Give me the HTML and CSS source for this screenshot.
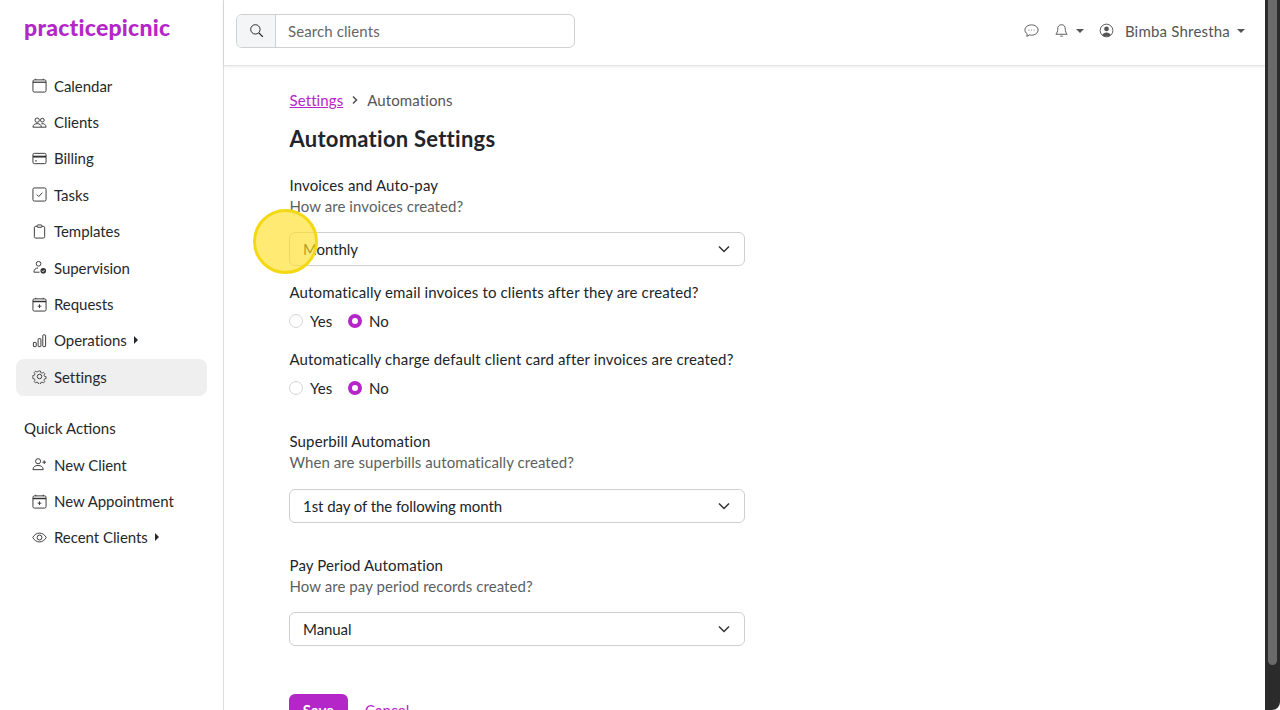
FILE: index.html
```html
<!DOCTYPE html>
<html lang="en">
<head>
<meta charset="utf-8">
<title>Automation Settings</title>
<link rel="stylesheet" href="styles.css">
</head>
<body>
<div class="app">
  <aside class="sidebar">
    <div class="logo">practicepicnic</div>
    <nav class="nav">
      <a class="item"><svg class="ico" viewBox="0 0 16 16"><rect x="1" y="2" width="14" height="13" rx="1.5"/><path d="M1 4.500h14" stroke-width="1.300"/><path d="M4 .8v1.200M12 .8v1.200"/></svg>Calendar</a>
      <a class="item"><svg class="ico" viewBox="0 0 16 16"><circle cx="5.500" cy="5.500" r="2.300"/><circle cx="11" cy="5.500" r="2"/><path d="M1 13c0-2.500 2-3.800 4.500-3.800S10 10.500 10 13zM10 9.300c2.500-.5 5 .8 5 3.700h-5"/></svg>Clients</a>
      <a class="item"><svg class="ico" viewBox="0 0 16 16"><rect x="1" y="2.500" width="14" height="11" rx="1.500"/><path d="M1 6h14" stroke-width="2"/><path d="M3.500 10.500h1.500" stroke-width="1.500"/></svg>Billing</a>
      <a class="item"><svg class="ico" viewBox="0 0 16 16"><rect x="1" y="1" width="14" height="14" rx="1.500"/><path d="M5 8l2.200 2.200L11 6"/></svg>Tasks</a>
      <a class="item"><svg class="ico" viewBox="0 0 16 16"><rect x="2.500" y="2.500" width="11" height="12.500" rx="1.500"/><rect x="5.500" y="1" width="5" height="2.500" rx=".6" fill="#fff"/></svg>Templates</a>
      <a class="item"><svg class="ico" viewBox="0 0 16 16"><circle cx="7" cy="4" r="2.500"/><path d="M2 13c0-3 2-4.500 4.500-4.500M2 13h6"/><circle cx="12" cy="11.500" r="3" fill="#333" stroke="none"/><path d="M10.700 11.500l1 1 1.600-1.800" stroke="#fff"/></svg>Supervision</a>
      <a class="item"><svg class="ico" viewBox="0 0 16 16"><rect x="1" y="2" width="14" height="13" rx="1.500"/><path d="M1 4.800h14" stroke-width="1.600"/><path d="M4 .8v1.500M12 .8v1.500M8 7.800v4M6 9.800h4"/></svg>Requests</a>
      <a class="item"><svg class="ico" viewBox="0 0 16 16"><rect x="1.500" y="10" width="3" height="4.500" rx=".6"/><rect x="6.500" y="6" width="3" height="8.500" rx=".6"/><rect x="11.500" y="2" width="3" height="12.500" rx=".6"/></svg>Operations<span class="caret-r"></span></a>
      <a class="item active"><svg class="ico" viewBox="0 0 16 16"><circle cx="8" cy="8" r="2.400"/><path d="M6.800 1.200h2.400l.4 2 1.500.7 1.800-1.100 1.700 1.700-1.100 1.800.7 1.500 2 .4v2.400l-2 .4-.7 1.500 1.100 1.800-1.700 1.700-1.800-1.100-1.500.7-.4 2H6.800l-.4-2-1.500-.7-1.800 1.100-1.700-1.700 1.100-1.800-.7-1.500-2-.4V6.800l2-.4.700-1.500-1.100-1.800 1.700-1.700 1.800 1.100 1.500-.7z" transform="translate(1.100 1.100) scale(.86)"/></svg>Settings</a>
    </nav>
    <div class="section">Quick Actions</div>
    <nav class="nav">
      <a class="item"><svg class="ico" viewBox="0 0 16 16"><circle cx="6.500" cy="4.500" r="2.700"/><path d="M1 13.500c0-3 2.500-4.500 5.500-4.500s5.500 1.500 5.500 4.500zM13 3.500v4M11 5.500h4"/></svg>New Client</a>
      <a class="item"><svg class="ico" viewBox="0 0 16 16"><rect x="1" y="2" width="14" height="13" rx="1.500"/><path d="M1 4.800h14" stroke-width="1.600"/><path d="M4 .8v1.500M12 .8v1.500M8 7.800v4M6 9.800h4"/></svg>New Appointment</a>
      <a class="item"><svg class="ico" viewBox="0 0 16 16"><path d="M.8 8C2.500 5 5 3.300 8 3.300S13.500 5 15.200 8c-1.700 3-4.200 4.700-7.200 4.700S2.500 11 .8 8z"/><circle cx="8" cy="8" r="2.600"/></svg>Recent Clients<span class="caret-r"></span></a>
    </nav>
  </aside>
  <div class="right">
    <header class="topbar">
      <div class="search">
        <span class="search-ico"><svg class="ico dark" viewBox="0 0 16 16"><circle cx="6.800" cy="6.800" r="5"/><path d="M10.500 10.500l4.300 4.300" stroke-width="1.400"/></svg></span>
        <span class="search-text">Search clients</span>
      </div>
      <div class="tools">
        <svg class="ico grey" viewBox="0 0 16 16"><path d="M8 2c3.800 0 7 2.300 7 5.500S11.800 13 8 13c-.8 0-1.500-.1-2.200-.3L3 14.300l.4-2.800C1.900 10.500 1 9.100 1 7.500 1 4.300 4.200 2 8 2z"/><path d="M5 7.500h.6M7.700 7.500h.6M10.400 7.500h.6" stroke-width="1.300"/></svg>
        <span class="bell"><svg class="ico grey" viewBox="0 0 16 16"><path d="M8 1.800c2.800 0 4 2.200 4 4.700 0 2.500.8 4 2 5.500H2c1.200-1.500 2-3 2-5.500 0-2.500 1.200-4.700 4-4.700zM6.700 14h2.600"/></svg><span class="caret-d"></span></span>
        <span class="user"><svg class="ico grey" viewBox="0 0 16 16"><circle cx="8" cy="8" r="6.800"/><circle cx="8" cy="6.300" r="2.500" fill="#555" stroke="none"/><path d="M3.500 13c.6-2.200 2.400-3 4.500-3s3.900.8 4.500 3c-2.400 2-6.600 2-9 0z" fill="#555" stroke="none"/></svg><span class="user-name">Bimba Shrestha</span><span class="caret-d"></span></span>
      </div>
    </header>
    <main class="main">
      <div class="crumbs"><a class="crumb-link">Settings</a><svg class="crumb-sep" viewBox="0 0 8 10"><path d="M2 1.500L5.500 5 2 8.500"/></svg><span class="crumb-cur">Automations</span></div>
      <h1 class="title">Automation Settings</h1>

      <section class="group first">
        <div class="label">Invoices and Auto-pay</div>
        <div class="hint">How are invoices created?</div>
        <div class="select">Monthly<svg class="chev" viewBox="0 0 12 8"><path d="M1 1.500L6 6.500l5-5"/></svg></div>
        <div class="label q">Automatically email invoices to clients after they are created?</div>
        <div class="radios"><span class="radio"></span><span class="opt">Yes</span><span class="radio on"></span><span class="opt">No</span></div>
        <div class="label q q2">Automatically charge default client card after invoices are created?</div>
        <div class="radios"><span class="radio"></span><span class="opt">Yes</span><span class="radio on"></span><span class="opt">No</span></div>
      </section>

      <section class="group g2">
        <div class="label">Superbill Automation</div>
        <div class="hint">When are superbills automatically created?</div>
        <div class="select">1st day of the following month<svg class="chev" viewBox="0 0 12 8"><path d="M1 1.500L6 6.500l5-5"/></svg></div>
      </section>

      <section class="group">
        <div class="label">Pay Period Automation</div>
        <div class="hint">How are pay period records created?</div>
        <div class="select">Manual<svg class="chev" viewBox="0 0 12 8"><path d="M1 1.500L6 6.500l5-5"/></svg></div>
      </section>

      <div class="actions"><button class="save">Save</button><a class="cancel">Cancel</a></div>
    </main>
  </div>
  <div class="scrollbar"><div class="thumb"></div></div>
  <div class="cursor"></div>
</div>
</body>
</html>
```
FILE: styles.css
```css
* { box-sizing: border-box; }
html, body { margin: 0; height: 100%; overflow: hidden; }
body { font-family: "Lato", "Noto Sans", sans-serif; font-size: 15px; color: #212529; background: #fff; }
.app { display: flex; width: 1280px; height: 710px; overflow: hidden; position: relative; }

.sidebar { width: 224px; flex: none; border-right: 1px solid #dcdcdc; padding: 12px 16px 0; }
.logo { font-weight: 900; font-size: 23px; line-height: 30px; color: #b526c9; padding-left: 8px; margin-bottom: 26px; letter-spacing: .25px; }
.nav { display: flex; flex-direction: column; }
.item { display: flex; align-items: center; height: 36.4px; padding: 0 0 1px 16px; border-radius: 8px; color: #26292c; letter-spacing: -.05px; }
.item.active { background: #efefef; }
.ico { width: 15px; height: 15px; flex: none; margin-right: 7px; fill: none; stroke: #333; stroke-width: 1; }
.ico.dark { margin: 0; stroke: #222; }
.ico.grey { margin: 0; stroke: #555; }
.caret-r { width: 0; height: 0; margin-left: 7px; border-left: 4px solid #26292c; border-top: 4px solid transparent; border-bottom: 4px solid transparent; }
.caret-d { width: 0; height: 0; border-top: 4px solid #555; border-left: 4px solid transparent; border-right: 4px solid transparent; }
.section { padding-left: 8px; margin-top: 22.5px; margin-bottom: 9px; line-height: 20px; color: #26292c; }

.right { flex: 1; min-width: 0; display: flex; flex-direction: column; }
.topbar { height: 66px; flex: none; display: flex; align-items: center; justify-content: space-between; padding: 0 20px 4px 12px; border-bottom: 1px solid #e3e3e3; box-shadow: 0 1px 3px rgba(0,0,0,.08); }
.search { display: flex; width: 339px; height: 34px; border: 1px solid #ced0d2; border-radius: 6px; overflow: hidden; }
.search-ico { width: 39px; flex: none; display: flex; align-items: center; justify-content: center; background: #f4f5f6; border-right: 1px solid #ced0d2; }
.search-text { padding-left: 12px; line-height: 32px; color: #666; letter-spacing: .1px; }
.tools { display: flex; align-items: center; gap: 15px; color: #555; }
.bell { display: flex; align-items: center; gap: 7px; }
.user { display: flex; align-items: center; }
.user-name { margin: 0 7px 0 11px; letter-spacing: .2px; }

.main { flex: 1; padding: 24px 0 0 65px; overflow: hidden; }
.crumbs { display: flex; align-items: center; line-height: 20px; color: #555; padding-left: .5px; }
.crumb-link { color: #b526c9; text-decoration: underline; letter-spacing: .1px; }
.crumb-cur { letter-spacing: .1px; }
.crumb-sep { width: 8px; height: 10px; margin: 0 8px; fill: none; stroke: #555; stroke-width: 1.600; }
.title { margin: 14px 0 0; padding-left: .5px; font-size: 22px; line-height: 30px; font-weight: 700; color: #212529; letter-spacing: .25px; }
.group { width: 456px; margin-top: 32px; }
.group.first { margin-top: 21px; }
.group.g2 { margin-top: 33px; }
.label { padding-left: .5px; line-height: 21px; color: #212529; letter-spacing: .13px; }
.hint { padding-left: .5px; line-height: 21px; color: #5c5f62; letter-spacing: .07px; }
.select { display: flex; align-items: center; justify-content: space-between; height: 34px; margin-top: 15px; padding: 0 14px 1px 13px; border: 1px solid #cfcfcf; border-radius: 6px; letter-spacing: -.07px; }
.g2 .select { margin-top: 16px; }
.chev { width: 12px; height: 8px; fill: none; stroke: #333; stroke-width: 1.500; }
.q { margin-top: 16px; }
.q2 { margin-top: 18px; }
.radios { display: flex; align-items: center; height: 21px; margin-top: 7px; letter-spacing: .1px; }
.radio { width: 14px; height: 14px; border: 1px solid #d5d5d5; border-radius: 50%; }
.radio.on { border: 4px solid #b526c9; background: #fff; }
.opt { margin: 0 15.5px 0 7px; }
.actions { display: flex; align-items: flex-start; gap: 17px; margin-top: 48px; }
.save { width: 59px; height: 36px; flex: none; padding: 0 0 5px; border: 0; border-radius: 6px; background: #b526c9; color: #fff; font: 700 15px "Lato", sans-serif; }
.cancel { padding-top: 6px; line-height: 20px; color: #b526c9; text-decoration: underline; }

.scrollbar { width: 15px; flex: none; background: #2b2b2b; padding: 0 3px; border-bottom-right-radius: 8px; }
.thumb { height: 665px; background: #6a6a6a; border-radius: 0 0 5px 5px; }
.cursor { position: absolute; left: 253px; top: 209px; width: 65px; height: 65px; border: 3px solid #f3d914; border-radius: 50%; background: rgba(255, 222, 40, .65); }
```
